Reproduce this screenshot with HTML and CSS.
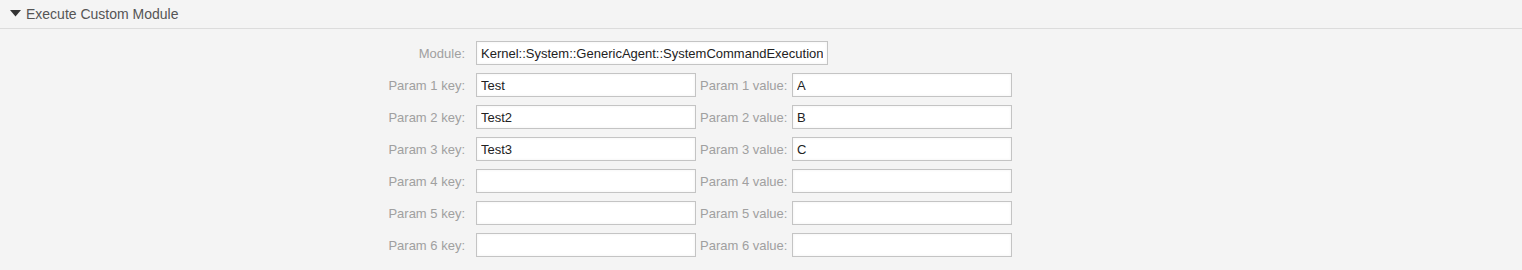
FILE: index.html
```html
<!DOCTYPE html>
<html lang="en">
<head>
  <meta charset="UTF-8">
  <title>Execute Custom Module</title>
  <link rel="stylesheet" href="styles.css">
</head>
<body>
  <div class="widget">
    <div class="widget-head">
      <svg class="toggle" width="11" height="7" viewBox="0 0 11 7"><polygon points="0,0 11,0 5.5,6.5" fill="#333"/></svg>
      <span>Execute Custom Module</span>
    </div>

    <div class="widget-body">
      <div class="row">
        <label class="key-label" for="module">Module:</label>
        <input type="text" id="module" class="field wide" value="Kernel::System::GenericAgent::SystemCommandExecution">
      </div>
      <div class="row">
        <label class="key-label" for="k1">Param 1 key:</label>
        <input type="text" id="k1" class="field" value="Test">
        <label class="value-label" for="v1">Param 1 value:</label>
        <input type="text" id="v1" class="field" value="A">
      </div>
      <div class="row">
        <label class="key-label" for="k2">Param 2 key:</label>
        <input type="text" id="k2" class="field" value="Test2">
        <label class="value-label" for="v2">Param 2 value:</label>
        <input type="text" id="v2" class="field" value="B">
      </div>
      <div class="row">
        <label class="key-label" for="k3">Param 3 key:</label>
        <input type="text" id="k3" class="field" value="Test3">
        <label class="value-label" for="v3">Param 3 value:</label>
        <input type="text" id="v3" class="field" value="C">
      </div>
      <div class="row">
        <label class="key-label" for="k4">Param 4 key:</label>
        <input type="text" id="k4" class="field">
        <label class="value-label" for="v4">Param 4 value:</label>
        <input type="text" id="v4" class="field">
      </div>
      <div class="row">
        <label class="key-label" for="k5">Param 5 key:</label>
        <input type="text" id="k5" class="field">
        <label class="value-label" for="v5">Param 5 value:</label>
        <input type="text" id="v5" class="field">
      </div>
      <div class="row">
        <label class="key-label" for="k6">Param 6 key:</label>
        <input type="text" id="k6" class="field">
        <label class="value-label" for="v6">Param 6 value:</label>
        <input type="text" id="v6" class="field">
      </div>
    </div>
  </div>
</body>
</html>
```

FILE: styles.css
```css
body {
  margin: 0;
  background-color: #f4f4f4;
  font-family: 'Liberation Sans', Arial, sans-serif;
  font-size: 13px;
  color: #333;
}

.widget-head {
  display: flex;
  align-items: center;
  height: 28px;
  padding-left: 10px;
  border-bottom: 1px solid #dcdcdc;
  font-size: 14px;
  color: #555;
}

.toggle {
  margin-right: 5px;
  margin-top: -1px;
}

.widget-body {
  display: flex;
  flex-direction: column;
  gap: 8px;
  padding-top: 12px;
}

.row {
  display: flex;
  align-items: center;
}

.key-label {
  width: 465px;
  margin-right: 11px;
  text-align: right;
  color: #a0a0a0;
}

.value-label {
  width: 88px;
  margin: 0 4px;
  color: #a0a0a0;
  white-space: nowrap;
}

.field {
  width: 220px;
  height: 24px;
  box-sizing: border-box;
  margin: 0;
  padding: 0 4px;
  border: 1px solid #c4c4c4;
  border-radius: 0;
  background: #fff;
  box-shadow: inset 0 0 3px rgba(0, 0, 0, 0.06);
  font-family: 'Liberation Sans', Arial, sans-serif;
  font-size: 13px;
  color: #222;
  outline: none;
}

.field.wide {
  width: 352px;
}
```
